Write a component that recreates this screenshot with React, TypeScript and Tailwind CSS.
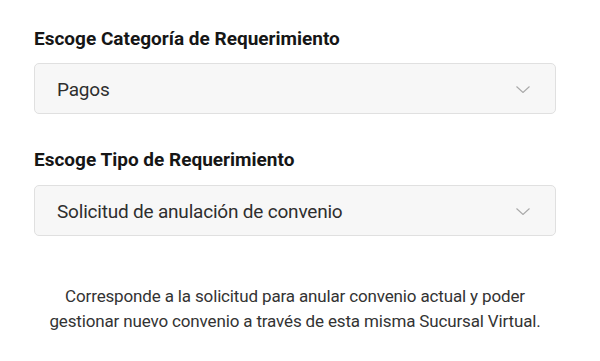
function SelectBox({ value }: { value: string }) {
  return (
    <div className="flex h-[51px] w-full items-center justify-between rounded-[5px] border border-[#e0e0e0] bg-[#f7f7f7] pl-[22px] pr-[25px]">
      <span className="pt-[3px] text-[19px] tracking-[-0.2px] text-[#2e2e2e]">{value}</span>
      <svg width="14" height="7" viewBox="0 0 14 7" fill="none" className="mt-[2px] text-[#a8a8a8]">
        <path d="M0.5 0.5l6.5 6 6.5-6" stroke="currentColor" strokeWidth="1.1" />
      </svg>
    </div>
  );
}

export default function App() {
  return (
    <div
      className="min-h-screen bg-white"
      style={{ fontFamily: 'Roboto, "Liberation Sans", sans-serif' }}
    >
      <div className="ml-[34px] flex w-[522px] flex-col pt-[27px]">
        <h2 className="text-[19px] font-bold leading-[24px] text-[#161616]">
          Escoge Categoría de Requerimiento
        </h2>
        <div className="mt-[12px]">
          <SelectBox value="Pagos" />
        </div>

        <h2 className="mt-[34px] text-[19px] font-bold leading-[24px] text-[#161616]">
          Escoge Tipo de Requerimiento
        </h2>
        <div className="mt-[13px]">
          <SelectBox value="Solicitud de anulación de convenio" />
        </div>

        <p className="mt-[48px] text-center text-[17px] leading-[25px] tracking-[-0.15px] text-[#333333]">
          Corresponde a la solicitud para anular convenio actual y poder
          <br />
          gestionar nuevo convenio a través de esta misma Sucursal Virtual.
        </p>
      </div>
    </div>
  );
}
